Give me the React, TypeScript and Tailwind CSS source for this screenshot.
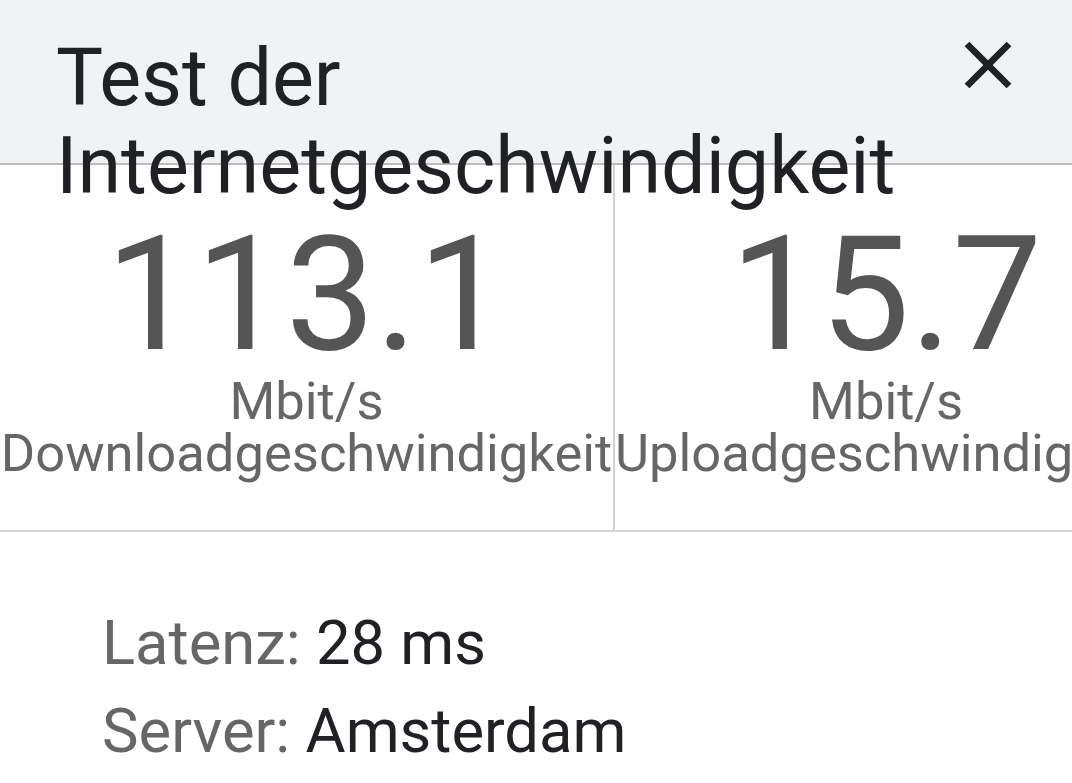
import React from "react";

const font = { fontFamily: "Roboto, 'Noto Sans', sans-serif" };

function CloseIcon() {
  return (
    <svg viewBox="0 0 24 24" className="w-[80px] h-[80px] fill-[#202124]">
      <path d="M19 6.41L17.59 5 12 10.59 6.41 5 5 6.41 10.59 12 5 17.59 6.41 19 12 13.41 17.59 19 19 17.59 13.41 12z" />
    </svg>
  );
}

function Stat({ value, label, className }: { value: string; label: string; className?: string }) {
  return (
    <div className={"flex-none flex flex-col items-center pt-[50px] pb-[51px] " + (className ?? "")}>
      <div className="text-[160px] leading-[160px] text-[#555555]">{value}</div>
      <div className="text-[52.5px] leading-[52px] text-[#666666]">Mbit/s</div>
      <div className="text-[52.5px] leading-[52px] text-[#666666] whitespace-nowrap">{label}</div>
    </div>
  );
}

export default function App() {
  return (
    <div className="w-[1072px] h-[783px] overflow-hidden bg-white" style={font}>
      {/* Header */}
      <header className="h-[165px] bg-[#f1f2f4] border-b-2 border-[#bcbcbc] flex items-start justify-between">
        <h1 className="pl-[56px] pt-[34px] text-[79px] leading-[88px] text-[#202124] font-normal w-[860px]">
          Test der Internetgeschwindigkeit
        </h1>
        <button className="mt-[25px] mr-[44px]">
          <CloseIcon />
        </button>
      </header>

      {/* Speeds */}
      <div className="flex border-b-2 border-[#d6d6d6] overflow-hidden">
        <Stat value="113.1" label="Downloadgeschwindigkeit" className="w-[615px] border-r-2 border-[#d3d3d3]" />
        <Stat value="15.7" label="Uploadgeschwindigkeit" />
      </div>

      {/* Details */}
      <div className="pl-[102px] pt-[67px] text-[61.5px] leading-[88px]">
        <div>
          <span className="text-[#666666]">Latenz: </span>
          <span className="text-[#202124]">28 ms</span>
        </div>
        <div>
          <span className="text-[#666666]">Server: </span>
          <span className="text-[#202124]">Amsterdam</span>
        </div>
      </div>
    </div>
  );
}
